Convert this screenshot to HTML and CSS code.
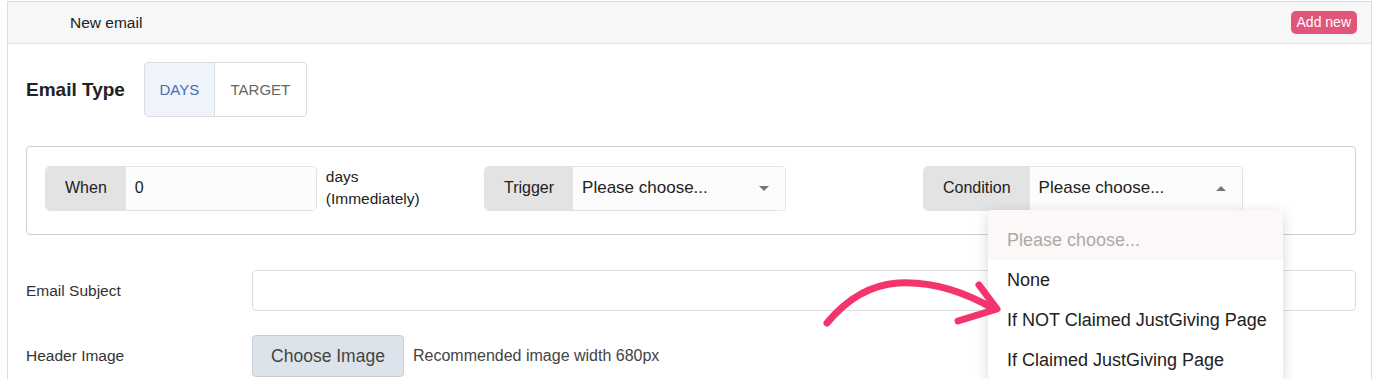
FILE: index.html
```html
<!DOCTYPE html>
<html>
  <head>
    <title>New email</title>
    <link rel="stylesheet" href="styles.css">
  </head>
  <body>
    <div class="panel">
      <div class="panel-head">
        <span class="panel-title">New email</span>
        <span class="badge">Add new</span>
      </div>

      <div class="panel-body">
        <div class="type-row">
          <h2>Email Type</h2>
          <div class="toggle">
            <span class="toggle-item active">DAYS</span>
            <span class="toggle-item">TARGET</span>
          </div>
        </div>

        <div class="rule-box">
          <div class="rule-col">
            <div class="group">
              <span class="addon">When</span>
              <span class="field when-field">0</span>
            </div>
            <span class="days">days<br />(Immediately)</span>
          </div>

          <div class="rule-col">
            <div class="group">
              <span class="addon">Trigger</span>
              <span class="field select">
                Please choose...
                <span class="caret down"></span>
              </span>
            </div>
          </div>

          <div class="rule-col condition">
            <div class="group">
              <span class="addon">Condition</span>
              <span class="field select">
                Please choose...
                <span class="caret up"></span>
              </span>
            </div>

            <!-- open dropdown -->
            <ul class="dropdown">
              <li class="placeholder">Please choose...</li>
              <li>None</li>
              <li>If NOT Claimed JustGiving Page</li>
              <li>If Claimed JustGiving Page</li>
            </ul>
          </div>
        </div>

        <div class="form-row subject-row">
          <label>Email Subject</label>
          <div class="text-input"></div>
        </div>

        <div class="form-row image-row">
          <label>Header Image</label>
          <span class="choose-btn">Choose Image</span>
          <span class="hint">Recommended image width 680px</span>
        </div>
      </div>
    </div>

    <!-- hand-drawn annotation arrow -->
    <svg class="annotation" width="1376" height="379" viewBox="0 0 1376 379">
      <path
        d="M827 323 C 846 300, 870 285, 898 283 C 934 281, 968 294, 994 309"
        fill="none"
        stroke="#f4356d"
        stroke-width="7"
        stroke-linecap="round"
      />
      <path
        d="M979 285 L997 309 L958 321"
        fill="none"
        stroke="#f4356d"
        stroke-width="7"
        stroke-linecap="round"
        stroke-linejoin="round"
      />
    </svg>
  </body>
</html>
```

FILE: styles.css
```css
body {
  margin: 0;
  background-color: #fff;
  color: #222;
  font-family: "Liberation Sans", Arial, sans-serif;
  overflow: hidden;
}

.panel {
  margin: 1px 4px 0 7px;
  border: 1px solid #ddd;
  border-bottom: none;
  height: 400px;
}

.panel-head {
  height: 41px;
  display: flex;
  align-items: center;
  justify-content: space-between;
  padding: 0 14px 0 62px;
  background-color: #f7f7f7;
  border-bottom: 1px solid #e3e3e3;
}

.panel-title {
  font-size: 15.5px;
  color: #222;
}

.badge {
  background-color: #e05579;
  color: #fff;
  font-size: 14px;
  height: 23px;
  line-height: 23px;
  padding: 0 6px;
  border-radius: 5px;
}

.panel-body {
  padding: 18px 15px 0 18px;
}

.type-row {
  display: flex;
  align-items: center;
  gap: 19px;
}

h2 {
  margin: 0;
  font-size: 19px;
  font-weight: bold;
  color: #222;
}

.toggle {
  display: flex;
  height: 53px;
  border: 1px solid #dcdcdc;
  border-radius: 4px;
  overflow: hidden;
}

.toggle-item {
  display: flex;
  align-items: center;
  justify-content: center;
  width: 91px;
  font-size: 15px;
  color: #666;
}

.toggle-item.active {
  width: 69px;
  background-color: #eef3fc;
  color: #4a6db3;
  border-right: 1px solid #dcdcdc;
}

.rule-box {
  margin-top: 29px;
  display: grid;
  grid-template-columns: 439px 439px 1fr;
  padding: 19px 19px 24px 19px;
  border: 1px solid #cfcfcf;
  border-radius: 4px;
}

.rule-col {
  display: flex;
  align-items: center;
  position: relative;
}

.group {
  display: flex;
  height: 43px;
  border-radius: 4px;
  box-shadow: 0 0 0 1px #e2e2e2;
}

.addon {
  display: flex;
  align-items: center;
  padding: 0 19px;
  background-color: #e3e3e3;
  border-radius: 4px 0 0 4px;
  font-size: 16px;
  color: #222;
}

.field {
  display: flex;
  align-items: center;
  padding: 0 9px;
  background-color: #fcfcfc;
  border-radius: 0 4px 4px 0;
  font-size: 17px;
  color: #222;
  position: relative;
}

.when-field {
  width: 172px;
  font-size: 16px;
}

.select {
  width: 194px;
}

.caret {
  position: absolute;
  right: 16px;
  top: 19px;
  width: 0;
  height: 0;
  border-left: 5px solid transparent;
  border-right: 5px solid transparent;
}

.caret.down {
  border-top: 5px solid #777;
}

.caret.up {
  border-bottom: 5px solid #777;
}

.days {
  margin-left: 10px;
  font-size: 15.5px;
  line-height: 22px;
  color: #222;
}

.dropdown {
  position: absolute;
  left: 64px;
  top: 44px;
  width: 295px;
  margin: 0;
  padding: 0;
  list-style: none;
  background-color: #fff;
  border-radius: 4px;
  box-shadow: 0 3px 14px rgba(0, 0, 0, 0.16);
  z-index: 5;
}

.dropdown li {
  height: 40px;
  line-height: 40px;
  padding-left: 19px;
  font-size: 18px;
  color: #222;
  white-space: nowrap;
}

.dropdown li.placeholder {
  height: 50px;
  line-height: 60px;
  color: #aaa;
  background-color: #fcf8f8;
  border-radius: 4px 4px 0 0;
}

.form-row {
  display: flex;
  align-items: center;
}

.form-row label {
  width: 226px;
  font-size: 15.5px;
  color: #333;
}

.subject-row {
  margin-top: 35px;
}

.text-input {
  flex: 1;
  height: 39px;
  border: 1px solid #dedede;
  border-radius: 4px;
}

.image-row {
  margin-top: 24px;
}

.choose-btn {
  display: flex;
  align-items: center;
  justify-content: center;
  width: 150px;
  height: 40px;
  background-color: #dde3ea;
  border: 1px solid #c8cfd7;
  border-radius: 4px;
  font-size: 17.5px;
  color: #444;
}

.hint {
  margin-left: 9px;
  font-size: 16px;
  color: #444;
}

.annotation {
  position: absolute;
  left: 0;
  top: 0;
  pointer-events: none;
  z-index: 10;
}
```
